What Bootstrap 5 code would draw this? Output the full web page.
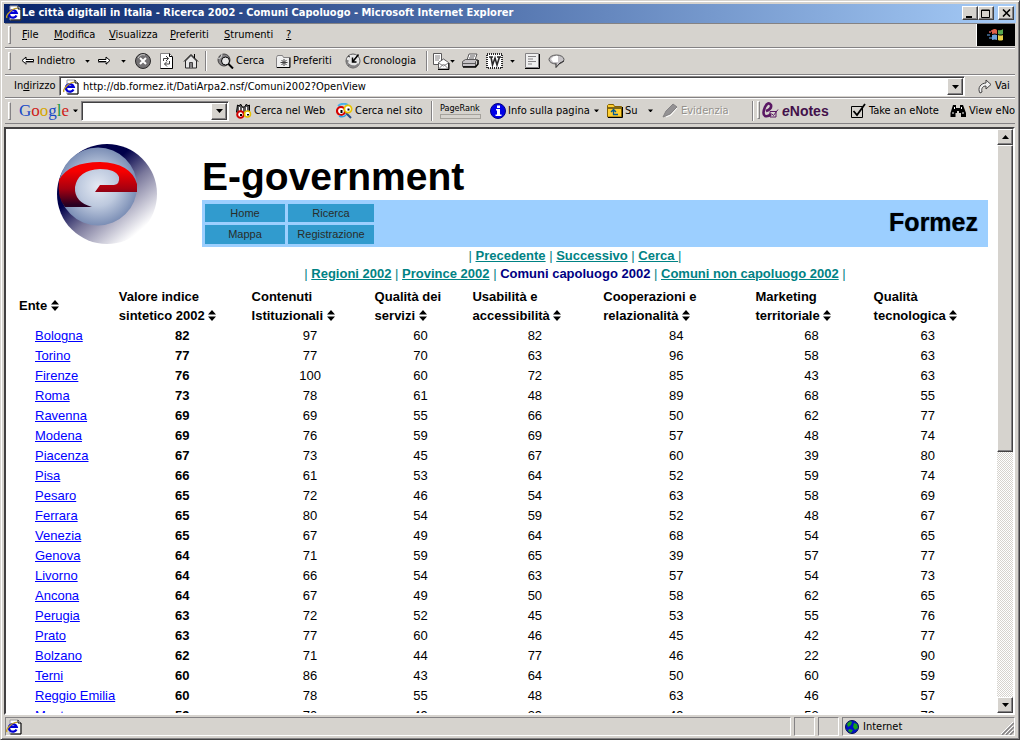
<!DOCTYPE html>
<html lang="it">
<head>
<meta charset="utf-8">
<meta name="viewport" content="width=device-width, initial-scale=1">
<title>Le città digitali in Italia - Ricerca 2002 - Comuni Capoluogo</title>
<link href="https://cdn.jsdelivr.net/npm/bootstrap@5.3.0/dist/css/bootstrap.min.css" rel="stylesheet">
<style>
:root{--face:#d6d3ce;--shade:#848284;--dark:#424142}
body{background:var(--face);color:#000;font:11px/14px "DejaVu Sans Condensed","DejaVu Sans",sans-serif}
button,input{font:inherit;color:inherit}
svg{display:block;flex:none}
.win{padding:2px;border:1px solid;border-color:var(--face) var(--dark) var(--dark) var(--face);box-shadow:inset 1px 1px #fff,inset -1px -1px var(--shade)}
.inner-frame{margin:1px}
.titlebar{height:19px;background:linear-gradient(90deg,#08246b,#a5cbf7);color:#fff;font-weight:700;padding:0 2px}
.cap-btn,.arrow-btn{background:var(--face);border:1px solid;border-color:#fff var(--dark) var(--dark) #fff;box-shadow:inset -1px -1px var(--shade);padding:0;display:flex;align-items:center;justify-content:center;flex:none}
.cap-btn{width:16px;height:14px}
.arrow-btn{width:16px;height:16px}
.band{display:grid;align-items:center;border-top:1px solid #fff;border-bottom:1px solid var(--shade);margin:0 1px;white-space:nowrap}
.band>*{min-width:0}
.band .flat{background:none;border:0;padding:0;display:flex;align-items:center;gap:2px;text-align:left;overflow:visible}
.menus{height:26px;grid-template-columns:17px 32px 55px 61px 54px 62px 1fr 39px;border-top-color:var(--shade)}
.tools{height:27px;grid-template-columns:16px 60px 16px 20px 14px 24px 24px 26px 8px 59px 69px 77px 10px 22px 12px 24px 24px 14px 24px 1fr}
.address{height:24px;grid-template-columns:9px 45px 1fr 50px}
.google{height:26px;grid-template-columns:14px 50px 12px 148px 6px 101px 95px 9px 50px 104px 12px 38px 18px 90px 10px 88px 100px 1fr}
.grip{width:3px;height:18px;margin-left:3px;border:1px solid;border-color:#fff var(--shade) var(--shade) #fff}
.sep{width:2px;height:20px;margin-left:4px;border-left:1px solid var(--shade);border-right:1px solid #fff}
.caret{width:5px;height:3px;background:#000;clip-path:polygon(0 0,100% 0,50% 100%);margin:auto}
.throbber{background:#000;height:22px;border-left:1px solid #fff}
.combo{background:#fff;border:1px solid;border-color:var(--shade) #fff #fff var(--shade);box-shadow:inset 1px 1px var(--dark);padding:2px 1px 1px 3px;height:20px}
.combo input{border:0;background:none;outline:0;padding:0;min-width:0;flex:1}
.combo .arrow-btn{height:17px}
.glogo{font:17px/18px "Liberation Serif",serif}
.rank{font-size:9px;line-height:10px}
.rank i{display:block;width:41px;height:5px;border:1px solid #a5a29c;margin-top:1px}
.enotes{font:bold 14px/16px "Liberation Sans Narrow","Liberation Sans",sans-serif;color:#42104a}
.off{color:#94918c;text-shadow:1px 1px #fff}
.view{border:2px solid;border-color:var(--dark) #fff #fff var(--dark);margin:3px 1px 0 0;background:#fff}
.doc{font:13px/18px "Liberation Sans",Arial,sans-serif}
.page-body{padding:0 12px 0 10px}
.head-grid{display:grid;grid-template-columns:145px 1fr;margin:0 -3px 0 41px}
.logo-cell{padding-top:15px}
.doc h1{font:bold 39px/46px "Liberation Sans",Arial,sans-serif;margin:0;padding-top:25px}
.banner{background:#9ccfff;height:47px;padding:4px 10px 3px 3px}
.navgrid{display:grid;grid-template-columns:80px 86px;gap:3px}
.navgrid a{background:#319bce;color:#292c29;text-decoration:none;text-align:center;font-size:11px;line-height:18px}
.brandname{font-size:25px;line-height:36px;font-weight:700;text-shadow:0 0 1px #0051a5}
.crumbs{color:#008284;padding-left:149px}
.crumbs a{color:#008284;font-weight:700}
.crumbs b{color:#000082}
.scores{width:100%;table-layout:fixed;border-collapse:collapse;margin-top:4px}
.scores th{font-weight:700;line-height:19px;padding:0 3px 1px;vertical-align:middle;white-space:nowrap}
.scores td{height:20px;line-height:20px;padding:0;text-align:center}
.scores td:first-child{text-align:left;padding-left:19px;white-space:nowrap}
.scores td:nth-child(2){font-weight:700}
.scores a{color:#0000ff}
.sort{display:inline-block;vertical-align:-1px}
.track{width:16px;background:repeating-conic-gradient(#fff 0 25%,#d6d3ce 0 50%) 0 0/2px 2px}
.thumb{flex:0 0 52.6%;background:var(--face);border:1px solid;border-color:#fff var(--dark) var(--dark) #fff;box-shadow:inset -1px -1px var(--shade)}
.status{height:19px;margin:2px 1px 0;display:grid;grid-template-columns:1fr 21px 21px 173px;gap:3px}
.pane{border:1px solid;border-color:var(--shade) #fff #fff var(--shade);display:flex;align-items:center;padding-left:2px}
</style>
</head>
<body>
<svg width="0" height="0" class="position-absolute" aria-hidden="true">
  <defs>
    <symbol id="ie" viewBox="0 0 16 16"><path d="M4 1h8l3 3v11H4z" fill="#fff" stroke="#9c9a9c"/><path d="M15 4v11H4.500M12 1v3h3" fill="none" stroke="#000"/><path d="M10.500 10.500A4 3.800 0 1 1 10.700 7.800H3" fill="none" stroke="#0000d6" stroke-width="2.200"/><path d="M1 13C-1 10 7 3 11 3.500" fill="none" stroke="#c6a221" stroke-width="1.300"/></symbol>
    <symbol id="sortmark" viewBox="0 0 8 11"><path d="M0 4.500L4 0l4 4.500zM0 6.500h8L4 11z"/></symbol>
    <symbol id="back" viewBox="0 0 14 10"><path d="M1 4.500L5 1v2.500h7.500v2H5V8z" fill="#fff" stroke="#000"/><path d="M5 9V6.500h8" fill="none" stroke="#848284"/></symbol>
    <symbol id="bino" viewBox="0 0 16 16"><path d="M2 2l2 1 1-2 2 3h2l2-3 1 2 2-1v7l-3 3H4L1 9z" fill="#5a595a" stroke="#000"/><path d="M4 4v4M7 5v4M11 4v4" stroke="#fff"/><circle cx="5" cy="11.500" r="3.300" fill="#fff" stroke="#ce0000" stroke-width="2"/><circle cx="12" cy="11" r="3" fill="#fff" stroke="#e7c300" stroke-width="1.600"/><path d="M4.500 11h2v2h-2zM11.500 11h2v1.500h-2z"/></symbol>
  </defs>
</svg>

<div class="win vh-100 d-flex flex-column overflow-hidden">
<div class="inner-frame d-flex flex-column flex-grow-1 overflow-hidden">
  <header class="titlebar d-flex align-items-center">
    <svg width="16" height="16"><use href="#ie"/></svg>
    <span class="me-auto text-nowrap">Le città digitali in Italia - Ricerca 2002 - Comuni Capoluogo - Microsoft Internet Explorer</span>
    <button class="cap-btn" aria-label="Riduci a icona"><svg width="10" height="9"><path d="M1 7h6v2H1z"/></svg></button>
    <button class="cap-btn" aria-label="Ingrandisci"><svg width="10" height="9"><path d="M.5 1h8v7.500h-8zM.5 1.500h8" fill="none" stroke="#000"/></svg></button>
    <button class="cap-btn ms-1" aria-label="Chiudi"><svg width="9" height="8"><path d="M1 .5l7 7M8 .5l-7 7" stroke="#000" stroke-width="1.600"/></svg></button>
  </header>

  <nav class="band menus" aria-label="Menu">
    <span class="grip"></span>
    <button class="flat"><span><u>F</u>ile</span></button>
    <button class="flat"><span><u>M</u>odifica</span></button>
    <button class="flat"><span><u>V</u>isualizza</span></button>
    <button class="flat"><span><u>P</u>referiti</span></button>
    <button class="flat"><span><u>S</u>trumenti</span></button>
    <button class="flat"><u>?</u></button>
    <span class="throbber d-flex align-items-center justify-content-center"><svg width="18" height="14"><g fill="#944"><path d="M2 3h2v2H2zM4 2h2v2H4z"/></g><path d="M0 6h3v2H0zM2 9h3v2H2z" fill="#357"/><path d="M5 2q3-2 5 0v4q-2-1-5 0z" fill="#e06048"/><path d="M11 2q3 1 5-1v5q-3 1-5 0z" fill="#58a850"/><path d="M5 7q3-1 5 0v5q-2-1-5 0z" fill="#6ba0dc"/><path d="M11 7q3 1 5 0v5q-3 1-5 0z" fill="#e8d048"/></svg></span>
  </nav>

  <div class="band tools" role="toolbar" aria-label="Pulsanti standard">
    <span class="grip"></span>
    <button class="flat"><svg width="14" height="10"><use href="#back"/></svg>Indietro</button>
    <button class="flat" aria-label="Cronologia indietro"><span class="caret ms-1"></span></button>
    <button class="flat" aria-label="Avanti"><svg width="14" height="10" viewBox="0 0 14 10"><path d="M13 4.500L9 1v2.500H1.500v2H9V8z" fill="#fff" stroke="#000"/><path d="M9 9l4-4M1 6.500h8" fill="none" stroke="#848284"/></svg></button>
    <button class="flat" aria-label="Cronologia avanti"><span class="caret ms-1"></span></button>
    <button class="flat ps-1" aria-label="Termina"><svg width="16" height="16"><circle cx="8" cy="8" r="7.500" fill="#737173" stroke="#292829"/><path d="M3 5a6 6 0 0 1 7-3" stroke="#ccc" fill="none"/><path d="M5 5l6 6M11 5l-6 6" stroke="#fff" stroke-width="2"/></svg></button>
    <button class="flat ps-1" aria-label="Aggiorna"><svg width="15" height="16"><path d="M1.500.5h9l3 3v12h-12z" fill="#fff" stroke="#848284"/><path d="M13.500 4v11.500h-12M10.500.5v3h3" fill="none" stroke="#000"/><path d="M4.500 8V5.500h5M7 3l2.500 2.500L7 8M10.500 8v3h-5M8 13.500L5.500 11 8 8.500" fill="none" stroke="#424142"/></svg></button>
    <button class="flat ps-1" aria-label="Pagina iniziale"><svg width="16" height="16"><path d="M2.500 8v7h11V8L8 2.500z" fill="#e7e7e7" stroke="#292829"/><path d="M1 8.500L8 1.500l7 7M11.500 1v4" fill="none" stroke="#000"/><path d="M6.500 15V9.500h3V15" fill="#848284" stroke="#424142"/></svg></button>
    <span class="sep ms-0"></span>
    <button class="flat ps-1"><svg width="17" height="16"><circle cx="7" cy="7" r="6" fill="#848284" stroke="#424142"/><circle cx="8.500" cy="8" r="4" fill="#e7e7e7" stroke="#000"/><path d="M1 5q3 2 4-4" stroke="#ddd" fill="none"/><path d="M11.500 11l4.500 4.500" stroke="#000" stroke-width="2"/></svg><span>Cerca</span></button>
    <button class="flat ps-1"><svg width="15" height="14"><path d="M.5 13.500V3.500l1-2h5l1 2h6v10z" fill="#efefef" stroke="#848284"/><path d="M14 3.500v10H1" fill="none" stroke="#000"/><path d="M8 5v7M4.500 8.500h7M5.500 6l5 5M10.500 6l-5 5" stroke="#424142"/></svg>Preferiti</button>
    <button class="flat ps-1"><svg width="16" height="16"><circle cx="8" cy="8" r="7" fill="#e7e7e7" stroke="#5a595a"/><path d="M3 3l2 1M1.500 8h2M3 13l2-2M8 14.500v-2M13 12l-1-1" stroke="#292829"/><path d="M1.500 9q1 5 6.500 5.500t6.500-4l-2 0q-2 3-6 1.500T3 8z" fill="#848284"/><path d="M7.500 9l6-7.500M7.500 4.500V9h4" stroke="#000" fill="none" stroke-width="1.500"/></svg>Cronologia</button>
    <span class="sep ms-2"></span>
    <button class="flat ps-1" aria-label="Posta"><svg width="18" height="17"><path d="M1.500.5h8v11h-8z" fill="#fff" stroke="#5a595a"/><path d="M3 3h5M3 5h5M3 7h4" stroke="#848284"/><path d="M6.500 16V9.500L11.500 6l5 3.500V16z" fill="#fff" stroke="#5a595a"/><path d="M6.500 16l5-5 5 5M6.500 10l5 3 5-3" fill="none" stroke="#848284"/><path d="M17 10v6.500H6" fill="none" stroke="#000"/></svg></button>
    <button class="flat" aria-label="Opzioni posta"><span class="caret ms-0"></span></button>
    <button class="flat" aria-label="Stampa"><svg width="17" height="16"><path d="M5 7l2-6h8l-2 6z" fill="#fff" stroke="#5a595a"/><path d="M.5 8.500l3-2h12l-2 2v5H.5z" fill="#c6c3c6" stroke="#5a595a"/><path d="M1 10.500h12M8 3h5M7 5h5" stroke="#5a595a"/><path d="M1 14h12.500l2.500-3V7" fill="none" stroke="#000" stroke-width="1.500"/></svg></button>
    <button class="flat" aria-label="Modifica"><svg width="17" height="16"><rect x="1" y="1" width="15" height="14" fill="#fff" stroke="#292829" stroke-width="2" stroke-dasharray="1 1"/><path d="M3 4h4M5 4l1.500 8L9 5l2 7 2.500-8M11 4h4" fill="none" stroke="#292829" stroke-width="1.600"/></svg></button>
    <button class="flat" aria-label="Opzioni modifica"><span class="caret ms-0"></span></button>
    <button class="flat" aria-label="Discussione"><svg width="17" height="16"><path d="M1.500.5h13v14h-13z" fill="#efefef" stroke="#848284"/><path d="M15.500 1v14.500H1" fill="none" stroke="#000"/><path d="M4 3.500h8M4 6h5M4 8.500h8M4 11h4" stroke="#848284"/></svg></button>
    <button class="flat" aria-label="Messenger"><svg width="18" height="15"><ellipse cx="8.500" cy="5.500" rx="7.500" ry="4.500" fill="#c6c3c6" stroke="#5a595a"/><path d="M3 5q3-4 7-3v6H5z" fill="#fff"/><path d="M8 9.500v4l4-4.500 4-2" fill="#c6c3c6" stroke="#292829"/></svg></button>
  </div>

  <form class="band address" onsubmit="return false">
    <span></span>
    <label for="addr">In<u>d</u>irizzo</label>
    <div class="combo d-flex align-items-center">
      <svg width="16" height="16"><use href="#ie"/></svg>
      <input id="addr" class="ms-1" type="text" value="http://db.formez.it/DatiArpa2.nsf/Comuni2002?OpenView">
      <button type="button" class="arrow-btn" aria-label="Indirizzi recenti"><svg width="7" height="4"><path d="M0 0h7L3.500 4z"/></svg></button>
    </div>
    <button class="flat ps-2"><svg width="16" height="15" class="ms-1"><path d="M3 14C0 9 4 4 9 4V1l5 4.500L9 10V7C6 7 4 9 5 13z" fill="#efefef" stroke="#424142"/></svg><span class="ms-n1">Vai</span></button>
  </form>

  <form class="band google" onsubmit="return false">
    <span class="grip"></span>
    <label class="glogo" for="gq"><span style="color:#1849c6">G</span><span style="color:#ce2018">o</span><span style="color:#d6a600">o</span><span style="color:#1849c6">g</span><span style="color:#189a42">l</span><span style="color:#ce2018">e</span></label>
    <button type="button" class="flat" aria-label="Menu Google"><span class="caret ms-1"></span></button>
    <div class="combo d-flex align-items-center">
      <input id="gq" type="text">
      <button type="button" class="arrow-btn" aria-label="Ricerche recenti"><svg width="7" height="4"><path d="M0 0h7L3.500 4z"/></svg></button>
    </div>
    <span></span>
    <button class="flat"><svg width="17" height="16"><use href="#bino"/></svg>Cerca nel Web</button>
    <button type="button" class="flat"><svg width="17" height="16"><path d="M2 3q5-4 10-1" stroke="#4ab2e7" stroke-width="2" fill="none"/><path d="M10 10l5 5" stroke="#294a84" stroke-width="2"/><circle cx="5" cy="8" r="4" fill="#fff" stroke="#d60000" stroke-width="2.200"/><circle cx="12" cy="6" r="3.600" fill="#fff" stroke="#e7c300" stroke-width="1.800"/><path d="M4.500 7h2v3h-2zM11.500 5.500h2v2h-2z"/><path d="M3 13q4 2 7-1" stroke="#31a2e7" stroke-width="1.500" fill="none"/></svg>Cerca nel sito</button>
    <span class="sep ms-0"></span>
    <span class="rank">PageRank<i></i></span>
    <button type="button" class="flat"><svg width="16" height="16"><circle cx="8" cy="8" r="7.500" fill="#0000e7" stroke="#000084"/><path d="M7 2.500h3v2.500H7zM6 6h4v5.500h1.500V13H5.500v-1.500H7V7.500H6z" fill="#fff"/></svg>Info sulla pagina</button>
    <button type="button" class="flat" aria-label="Opzioni info"><span class="caret ms-0"></span></button>
    <button type="button" class="flat"><svg width="17" height="15"><path d="M1.500 14V2.500l1-1h5l1 2h7V14z" fill="#ffcf31" stroke="#846100"/><path d="M2 14.500h14.500V4M2 5h13" fill="none" stroke="#000"/><path d="M12 11.500H7.500V7M5 9l2.500-2.500L10 9" fill="none" stroke="#005994" stroke-width="1.300"/></svg>Su</button>
    <button type="button" class="flat" aria-label="Opzioni su"><span class="caret ms-1"></span></button>
    <button type="button" class="flat off" disabled><svg width="17" height="16"><path d="M1 14l3-6 7-7 4 3-7 7z" fill="#949294" stroke="#848284"/><path d="M4 14l5-2 6-7" fill="none" stroke="#fff"/></svg>Evidenzia</button>
    <span class="d-flex"><span class="sep ms-0"></span><span class="grip"></span></span>
    <span class="enotes flat"><svg width="18" height="17"><path d="M4 9q6-2 5-6-3-4-6 2-3 7 0 9 3 1 6-2" fill="none" stroke="#5a1863" stroke-width="2.600"/><path d="M8 9.500h6V15H8zM9.500 11.500l2 2 4.500-6" fill="none" stroke="#5a1863"/></svg><span><em>e</em>Notes</span></span>
    <button type="button" class="flat"><svg width="17" height="16"><path d="M1.500 3.500h11v11h-11z" fill="none" stroke="#000"/><path d="M3.500 8L7 12 15 1" fill="none" stroke="#000" stroke-width="1.800"/></svg>Take an eNote</button>
    <button type="button" class="flat overflow-hidden"><svg width="17" height="14"><path d="M3 1h3v3h4V1h3l3 8v4h-5V9H9V7H7v2H5.500v4H.5V9z"/><path d="M3 8v2M13 8v2M4.500 3v2M11.500 3v2" stroke="#fff"/></svg>View eNote</button>
  </form>

  <main class="view d-flex flex-grow-1 overflow-hidden">
    <div class="doc flex-grow-1 overflow-hidden">
      <div class="page-body">
        <div class="head-grid">
          <div class="logo-cell"><svg width="102" height="102" viewBox="0 0 102 102" role="img" aria-label="E-government">
            <defs>
              <linearGradient id="disc" x1=".25" y1=".15" x2=".85" y2=".85"><stop offset=".25" stop-color="#00004a"/><stop offset=".55" stop-color="#7b799c"/><stop offset="1" stop-color="#fff"/></linearGradient>
              <radialGradient id="ball"><stop offset="0" stop-color="#e4e9f3"/><stop offset=".5" stop-color="#bdc9de"/><stop offset="1" stop-color="#7b8eb5"/></radialGradient>
              <linearGradient id="red" x1="0" y1="0" x2="0" y2="1"><stop offset=".2" stop-color="#f70000"/><stop offset=".6" stop-color="#a50010"/><stop offset=".95" stop-color="#290021"/></linearGradient>
            </defs>
            <circle cx="50" cy="50" r="50" fill="url(#disc)"/>
            <circle cx="41" cy="42.500" r="39" fill="url(#ball)"/>
            <path d="M2 36Q12 18 43 18Q74 19 80 40v8H38l5-7h14q6-1 5-8-3-8-19-8-22 1-25 18-1 15 17 20H8Q0 54 2 36z" fill="url(#red)"/>
          </svg></div>
          <div>
            <h1>E-government</h1>
            <div class="banner d-flex justify-content-between">
              <nav class="navgrid" aria-label="Sito">
                <a href="#">Home</a><a href="#">Ricerca</a><a href="#">Mappa</a><a href="#">Registrazione</a>
              </nav>
              <span class="brandname">Formez</span>
            </div>
          </div>
        </div>
        <nav class="crumbs text-center" aria-label="Viste">
          <div>| <a href="#">Precedente</a> | <a href="#">Successivo</a> | <a href="#">Cerca&nbsp;</a>|</div>
          <div>| <a href="#">Regioni 2002</a> | <a href="#">Province 2002</a> | <b>Comuni capoluogo 2002</b> | <a href="#">Comuni non capoluogo 2002</a> |</div>
        </nav>
        <table class="scores">
          <colgroup><col style="width:10.3%"><col style="width:13.7%"><col style="width:12.7%"><col style="width:10.1%"><col style="width:13.5%"><col style="width:15.7%"><col style="width:12.2%"><col style="width:11.8%"></colgroup>
          <thead><tr id="heads"></tr></thead>
          <tbody id="rows"></tbody>
        </table>
      </div>
    </div>
    <div class="track d-flex flex-column flex-shrink-0">
      <button class="arrow-btn" aria-label="Scorri su"><svg width="7" height="4"><path d="M0 4h7L3.500 0z"/></svg></button>
      <div class="thumb flex-shrink-1"></div>
      <button class="arrow-btn mt-auto" aria-label="Scorri giù"><svg width="7" height="4"><path d="M0 0h7L3.500 4z"/></svg></button>
    </div>
  </main>

  <footer class="status">
    <div class="pane ps-0"><svg width="16" height="16"><use href="#ie"/></svg></div>
    <div class="pane"></div>
    <div class="pane"></div>
    <div class="pane"><svg width="14" height="14" class="me-1"><circle cx="7" cy="7" r="6.500" fill="#0010c6" stroke="#001052"/><path d="M2 4q3-4 5-2l-1 3-3 2zM9 3l3 1 1 4-3 2-2-3zM4 9l4 1-2 3-3-2z" fill="#18a218"/></svg><span class="me-auto">Internet</span><svg width="13" height="13" class="align-self-end"><path d="M1 13L13 1M5 13l8-8M9 13l4-4" stroke="#848284" stroke-width="1.500"/><path d="M0 12L12 0M4 12l8-8M8 12l4-4" stroke="#fff"/></svg></div>
  </footer>
</div>
</div>

<script>
const heads = ["Ente","Valore indice|sintetico 2002","Contenuti|Istituzionali","Qualità dei|servizi","Usabilità e|accessibilità","Cooperazioni e|relazionalità","Marketing|territoriale","Qualità|tecnologica"];
const data = `Bologna,82,97,60,82,84,68,63
Torino,77,77,70,63,96,58,63
Firenze,76,100,60,72,85,43,63
Roma,73,78,61,48,89,68,55
Ravenna,69,69,55,66,50,62,77
Modena,69,76,59,69,57,48,74
Piacenza,67,73,45,67,60,39,80
Pisa,66,61,53,64,52,59,74
Pesaro,65,72,46,54,63,58,69
Ferrara,65,80,54,59,52,48,67
Venezia,65,67,49,64,68,54,65
Genova,64,71,59,65,39,57,77
Livorno,64,66,54,63,57,54,73
Ancona,64,67,49,50,58,62,65
Perugia,63,72,52,45,53,55,76
Prato,63,77,60,46,45,42,77
Bolzano,62,71,44,77,46,22,90
Terni,60,86,43,64,50,60,59
Reggio Emilia,60,78,55,48,63,46,57
Mantova,59,70,49,39,49,53,79`;
document.getElementById("heads").innerHTML = heads.map(h => `<th scope="col">${h.replace("|","<br>")} <svg class="sort" width="8" height="11" aria-hidden="true"><use href="#sortmark"/></svg></th>`).join("");
document.getElementById("rows").innerHTML = data.split("\n").map(r => {
  const [name, ...v] = r.split(",");
  return `<tr><td><a href="#">${name}</a></td>${v.map(n => `<td>${n}</td>`).join("")}</tr>`;
}).join("");
</script>
<script src="https://cdn.jsdelivr.net/npm/bootstrap@5.3.0/dist/js/bootstrap.bundle.min.js"></script>
</body>
</html>
